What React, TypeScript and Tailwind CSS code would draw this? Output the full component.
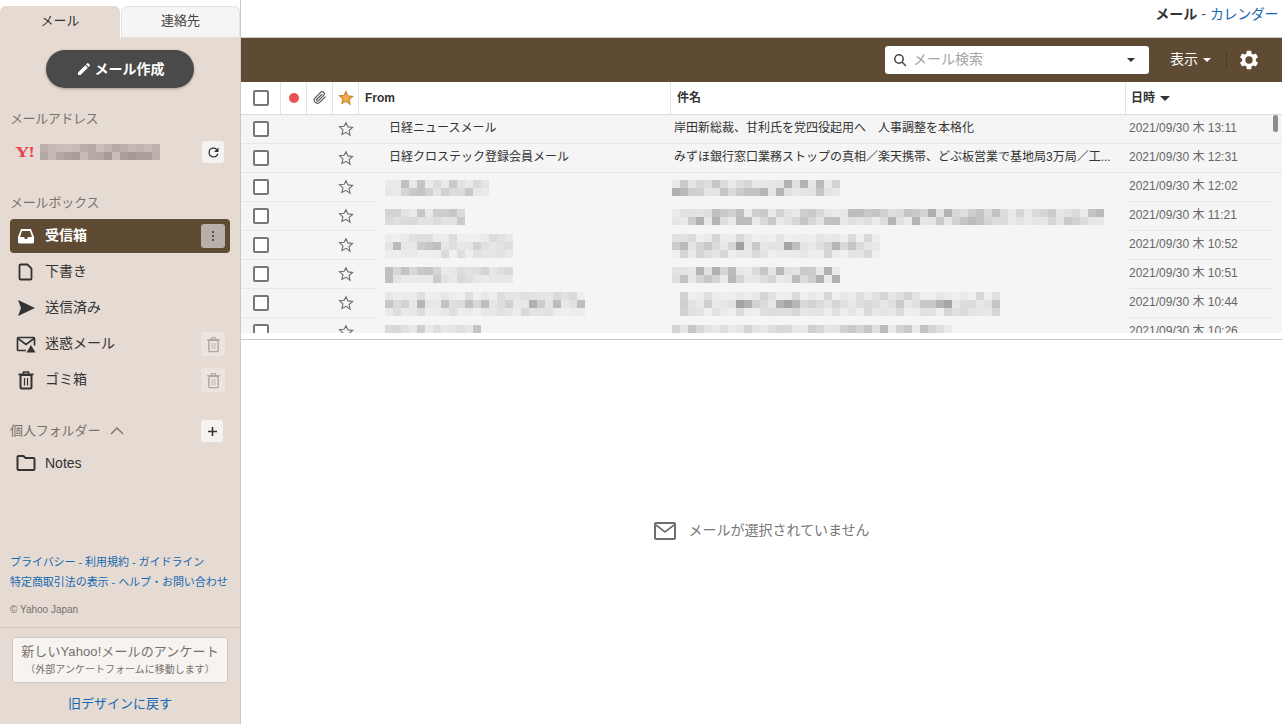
import React from "react";

const sans = "font-['Liberation_Sans','Noto_Sans_CJK_JP',sans-serif]";

function Mosaic({ width, rows, seed, dark = 0, offset = 0, warm = false }: { width: number; rows: number; seed: number; dark?: number; offset?: number; warm?: boolean }) {
  const cell = 8;
  const cols = Math.ceil(width / cell);
  let s = seed * 7919 + 13;
  const rnd = () => {
    s = (s * 16807) % 2147483647;
    return (s % 1000) / 1000;
  };
  const grid: string[][] = [];
  for (let r = 0; r < rows; r++) {
    const row: string[] = [];
    for (let c = 0; c < cols; c++) {
      const v = rnd();
      if (warm) {
        const d = Math.round(v * 45);
        row.push(`rgb(${205 - d},${194 - d},${187 - d})`);
      } else {
        const strong = rows === 3 ? (r === 1 ? 1 : 0.4) : 0.8;
        const depth = (v * v * (55 + dark) + 12) * strong;
        const g = Math.round(244 - depth);
        row.push(`rgb(${g},${g},${g})`);
      }
    }
    grid.push(row);
  }
  return (
    <div className="flex flex-col" style={{ marginLeft: offset }}>
      {grid.map((row, i) => (
        <div key={i} className="flex h-2">
          {row.map((c, j) => (
            <div key={j} className="h-2 w-2 shrink-0" style={{ backgroundColor: c }} />
          ))}
        </div>
      ))}
    </div>
  );
}

function Ico({ d, size = 20, color = "#3c3c3c", className = "" }: { d: string; size?: number; color?: string; className?: string }) {
  return (
    <svg width={size} height={size} viewBox="0 0 24 24" fill={color} className={className}>
      <path d={d} />
    </svg>
  );
}

const P = {
  edit: "M3 17.25V21h3.75L17.81 9.94l-3.75-3.75L3 17.25zM20.71 7.04a1 1 0 0 0 0-1.41l-2.34-2.34a1 1 0 0 0-1.41 0l-1.83 1.83 3.75 3.75 1.83-1.83z",
  refresh: "M17.65 6.35A7.96 7.96 0 0 0 12 4a8 8 0 1 0 7.73 10h-2.08A6 6 0 1 1 12 6c1.66 0 3.14.69 4.22 1.78L13 11h7V4l-2.35 2.35z",
  gear: "M19.43 12.98c.04-.32.07-.64.07-.98s-.03-.66-.07-.98l2.11-1.65a.5.5 0 0 0 .12-.64l-2-3.46a.5.5 0 0 0-.61-.22l-2.49 1a7.3 7.3 0 0 0-1.69-.98l-.38-2.65A.49.49 0 0 0 14 2h-4a.49.49 0 0 0-.49.42l-.38 2.65c-.61.25-1.17.59-1.69.98l-2.49-1a.49.49 0 0 0-.61.22l-2 3.46a.49.49 0 0 0 .12.64l2.11 1.65c-.04.32-.07.65-.07.98s.03.66.07.98l-2.11 1.65a.5.5 0 0 0-.12.64l2 3.46c.12.22.39.3.61.22l2.49-1c.52.4 1.08.73 1.69.98l.38 2.65c.03.24.24.42.49.42h4c.25 0 .46-.18.49-.42l.38-2.65c.61-.25 1.17-.59 1.69-.98l2.49 1c.23.09.49 0 .61-.22l2-3.46a.5.5 0 0 0-.12-.64l-2.11-1.65zM12 16a4 4 0 1 1 0-8 4 4 0 0 1 0 8z",
};

function Trash({ size = 20, color = "#333", sw = 2 }: { size?: number; color?: string; sw?: number }) {
  return (
    <svg width={size} height={size} viewBox="0 0 20 20" fill="none" stroke={color} strokeWidth={sw}>
      <path d="M2.5 4.5h15" />
      <path d="M7.5 4V2h5v2" strokeWidth={sw * 0.8} />
      <rect x="4.5" y="5" width="11" height="13.5" rx="1.5" />
      <path d="M8.5 8v7.5M11.5 8v7.5" strokeWidth={sw * 0.6} />
    </svg>
  );
}

function Star({ filled = false }: { filled?: boolean }) {
  return (
    <svg width="16" height="16" viewBox="0 0 24 24" fill={filled ? "#f2a950" : "none"} stroke={filled ? "#c98a2e" : "#6f6f6f"} strokeWidth={filled ? 1.8 : 1.7} strokeLinejoin="miter">
      <path d="M12 2.5l2.9 6.4 6.9.7-5.2 4.7 1.5 6.9L12 17l-6.1 3.2 1.5-6.9-5.2-4.7 6.9-.7z" />
    </svg>
  );
}

function Check() {
  return <div className="h-4 w-4 shrink-0 rounded-[2px] border-2 border-[#777] bg-white" />;
}

function Caret({ color = "#333", w = 5 }: { color?: string; w?: number }) {
  return <span className="inline-block h-0 w-0 border-x-transparent" style={{ borderLeftWidth: w, borderRightWidth: w, borderTopWidth: w, borderTopColor: color, borderBottomWidth: 0 }} />;
}

function NavRow({ icon, label, active = false, action }: { icon: React.ReactNode; label: string; active?: boolean; action?: React.ReactNode }) {
  return (
    <div className={`mb-[2px] flex h-[34px] items-center rounded-[4px] pl-[6px] pr-[5px] ${active ? "bg-[#5f4a33]" : ""}`}>
      <div className="flex w-[20px] justify-center">{icon}</div>
      <span className={`ml-[9px] flex-1 pb-[2px] text-[14px] ${active ? "font-bold text-white" : "text-[#333]"}`}>{label}</span>
      {action}
    </div>
  );
}

function DisabledTrash() {
  return (
    <div className="flex h-6 w-6 items-center justify-center rounded-[3px] bg-[#ece5df]">
      <Trash size={17} color="#a29c97" sw={1.4} />
    </div>
  );
}

function Sidebar() {
  return (
    <aside className="flex h-[724px] w-[241px] shrink-0 flex-col border-r border-[#c9c9c9] bg-white">
      <div className="flex h-[38px] items-end pt-[6px]">
        <div className="flex h-[32px] w-[120px] items-center justify-center rounded-t-[6px] bg-[#e5dbd3] pb-[2px] text-[13px] text-[#333]">メール</div>
        <div className="ml-px flex h-[32px] w-[119px] items-center justify-center rounded-t-[6px] border border-[#e2e2e2] bg-[#f5f5f5] pb-[2px] text-[13px] text-[#444]">連絡先</div>
      </div>
      <div className="flex flex-1 flex-col bg-[#e5dbd3]">
        <div className="flex justify-center pt-3">
          <div className="flex h-[38px] w-[148px] items-center justify-center rounded-full bg-[#4a4a4a] text-[14px] font-bold text-white shadow-[0_1px_3px_rgba(0,0,0,0.3)]">
            <Ico d={P.edit} size={16} color="#fff" className="mr-[3px]" />
            メール作成
          </div>
        </div>

        <div className="mt-[21px] pl-[10px] text-[13px] leading-[20px] tracking-[-0.4px] text-[#77716c]">メールアドレス</div>
        <div className="mt-[11px] flex h-[24px] items-center pl-[15px] pr-[16px]">
          <span className="w-[25px] origin-left scale-x-[1.35] font-['Liberation_Serif',serif] text-[15px] font-bold leading-none tracking-[-1px] text-[#f0404f]">Y!</span>
          <Mosaic width={120} rows={2} seed={3} warm />
          <div className="ml-auto flex h-[22px] w-[22px] items-center justify-center rounded-[3px] bg-[#f5f3f1]">
            <Ico d={P.refresh} size={15} color="#333" />
          </div>
        </div>

        <div className="mt-[29px] pl-[10px] text-[13px] leading-[20px] tracking-[-0.2px] text-[#77716c]">メールボックス</div>
        <div className="mt-[6px] px-[10px]">
          <NavRow
            active
            label="受信箱"
            icon={
              <svg width="18" height="18" viewBox="0 0 18 18" fill="#fff">
                <path d="M4 2h10l3 8v5a1.5 1.5 0 0 1-1.5 1.5h-13A1.5 1.5 0 0 1 1 15v-5zM5 4l-2 6h4l1 2h2l1-2h4l-2-6z" fillRule="evenodd" />
              </svg>
            }
            action={
              <div className="flex h-6 w-6 flex-col items-center justify-center gap-[2px] rounded-[3px] bg-[#b8b0a8]">
                <i className="h-[2px] w-[2px] rounded-full bg-[#333]" />
                <i className="h-[2px] w-[2px] rounded-full bg-[#333]" />
                <i className="h-[2px] w-[2px] rounded-full bg-[#333]" />
              </div>
            }
          />
          <NavRow
            label="下書き"
            icon={
              <svg width="18" height="18" viewBox="0 0 18 18" fill="none" stroke="#333" strokeWidth="1.8">
                <path d="M3.5 1.5h7l4 4v10a1 1 0 0 1-1 1h-10a1 1 0 0 1-1-1v-13a1 1 0 0 1 1-1z" />
              </svg>
            }
          />
          <NavRow
            label="送信済み"
            icon={
              <svg width="19" height="18" viewBox="0 0 19 18" fill="#333">
                <path d="M1 1L18 9 1 17l3-8z" />
              </svg>
            }
          />
          <NavRow
            label="迷惑メール"
            icon={
              <svg width="20" height="18" viewBox="0 0 20 18" fill="none" stroke="#333" strokeWidth="1.7">
                <path d="M10 15.5H2.5a1 1 0 0 1-1-1v-11a1 1 0 0 1 1-1h15a1 1 0 0 1 1 1v7" />
                <path d="M2 3.5l8 6 8-6" />
                <path d="M15 10l4.5 7.5h-9z" fill="#333" stroke="none" />
              </svg>
            }
            action={<DisabledTrash />}
          />
          <NavRow label="ゴミ箱" icon={<Trash size={20} />} action={<DisabledTrash />} />
        </div>

        <div className="mt-[20px] flex h-6 items-center pl-[10px] pr-[17px]">
          <span className="text-[13px] tracking-[-0.1px] text-[#77716c]">個人フォルダー</span>
          <svg width="14" height="14" viewBox="0 0 14 14" fill="none" stroke="#77716c" strokeWidth="1.3" className="ml-[10px]">
            <path d="M1 10l6-6 6 6" />
          </svg>
          <div className="ml-auto flex h-[22px] w-[22px] items-center justify-center rounded-[3px] bg-[#f5f3f1]">
            <svg width="11" height="11" viewBox="0 0 11 11" stroke="#333" strokeWidth="1.6">
              <path d="M5.5 1v9M1 5.5h9" />
            </svg>
          </div>
        </div>
        <div className="mt-[3px] flex h-[34px] items-center pl-[16px]">
          <svg width="20" height="18" viewBox="0 0 20 18" fill="none" stroke="#333" strokeWidth="2">
            <path d="M1.5 3a1 1 0 0 1 1-1h5l2 2h8a1 1 0 0 1 1 1v10a1 1 0 0 1-1 1h-15a1 1 0 0 1-1-1z" />
          </svg>
          <span className="ml-[9px] text-[14px] text-[#333]">Notes</span>
        </div>

        <div className="mt-auto px-[10px] text-[11px] tracking-[-0.05px] text-[#1568b0]">
          <div className="leading-[20px]">プライバシー - 利用規約 - ガイドライン</div>
          <div className="leading-[20px]">特定商取引法の表示 - ヘルプ・お問い合わせ</div>
        </div>
        <div className="mt-[8px] px-[10px] text-[10px] leading-[20px] text-[#77716c]">© Yahoo Japan</div>
        <div className="mt-[7px] border-t border-[#cfc6be] px-[12px] pt-[9px]">
          <div className="flex h-[46px] flex-col items-center justify-center rounded-[3px] border border-[#cfc8c2] bg-[#f6f3f0]">
            <div className="text-[13px] leading-[20px] tracking-[0.1px] text-[#77716c]">新しいYahoo!メールのアンケート</div>
            <div className="text-[10px] leading-[16px] text-[#77716c]">（外部アンケートフォームに移動します）</div>
          </div>
          <div className="mb-[10px] mt-[11px] text-center text-[13px] leading-[20px] text-[#1568b0]">旧デザインに戻す</div>
        </div>
      </div>
    </aside>
  );
}

type Mail = { from?: string; subj?: string; date: string; fw?: number; fr?: number; sw?: number; sr?: number; so?: number };

const mails: Mail[] = [
  { from: "日経ニュースメール", subj: "岸田新総裁、甘利氏を党四役起用へ　人事調整を本格化", date: "2021/09/30 木 13:11" },
  { from: "日経クロステック登録会員メール", subj: "みずほ銀行窓口業務ストップの真相／楽天携帯、どぶ板営業で基地局3万局／工...", date: "2021/09/30 木 12:31" },
  { fw: 104, fr: 2, sw: 168, sr: 2, so: 0, date: "2021/09/30 木 12:02" },
  { fw: 80, fr: 2, sw: 432, sr: 2, so: 0, date: "2021/09/30 木 11:21" },
  { fw: 128, fr: 3, sw: 208, sr: 3, so: 0, date: "2021/09/30 木 10:52" },
  { fw: 128, fr: 2, sw: 168, sr: 2, so: 0, date: "2021/09/30 木 10:51" },
  { fw: 200, fr: 3, sw: 320, sr: 3, so: 8, date: "2021/09/30 木 10:44" },
  { fw: 96, fr: 2, sw: 280, sr: 2, so: 0, date: "2021/09/30 木 10:26" },
];

function Row({ m, i }: { m: Mail; i: number }) {
  const line = m.from ? "border-b border-[#e8e8e8]" : "";
  return (
    <div className={`relative flex h-[29px] bg-[#f5f5f5] pr-[10px] text-[12px] ${line}`}>
      <div className={`flex w-[136px] shrink-0 ${m.from ? "" : "border-b border-[#e8e8e8]"}`}>
        <div className="flex w-[40px] items-center justify-center"><Check /></div>
        <div className="w-[52px]" />
        <div className="flex w-[26px] items-center justify-center"><Star /></div>
      </div>
      <div className="flex w-[296px] shrink-0 items-center">
        {m.from ? (
          <span className="ml-[12px] pb-[2px] text-[#333]">{m.from}</span>
        ) : (
          <div className="ml-[8px]"><Mosaic width={m.fw!} rows={m.fr!} seed={i + 10} /></div>
        )}
      </div>
      <div className="flex w-[456px] shrink-0 items-center">
        {m.subj ? (
          <span className="ml-[1px] pb-[2px] text-[#333]">{m.subj}</span>
        ) : (
          <div className="ml-[-1px]"><Mosaic width={m.sw!} rows={m.sr!} seed={i + 30} offset={m.so} dark={20} /></div>
        )}
      </div>
      <div className={`flex flex-1 items-center ${m.from ? "" : "border-b border-[#e8e8e8]"}`}>
        <span className="whitespace-nowrap pb-[2px] text-[#666]">{m.date}</span>
      </div>
    </div>
  );
}

function HeaderCell({ className, children }: { className: string; children?: React.ReactNode }) {
  return <div className={`flex h-full items-center border-r border-[#e4e4e4] ${className}`}>{children}</div>;
}

function Main() {
  return (
    <main className="flex h-[724px] min-w-0 flex-1 flex-col bg-white">
      <div className="flex h-[37px] items-start justify-end pr-[4px] pt-[4px] text-[14px] leading-[20px]">
        <span className="font-bold text-[#333]">メール</span>
        <span className="mx-[4px] text-[#555]">-</span>
        <span className="tracking-[-0.4px] text-[#1568b0]">カレンダー</span>
      </div>
      <div className="flex h-[45px] shrink-0 items-center justify-end border-t border-[#cfcfcf] bg-[#5f4a33] pr-[22px]">
        <div className="flex h-[28px] w-[264px] items-center rounded-[3px] bg-white pl-[8px] pr-[14px]">
          <svg width="14" height="14" viewBox="0 0 14 14" fill="none" stroke="#444" strokeWidth="1.5">
            <circle cx="6" cy="6" r="4.2" />
            <path d="M9 9l4 4" />
          </svg>
          <span className="ml-[6px] flex-1 pb-[1px] text-[14px] text-[#a5a5a5]">メール検索</span>
          <Caret color="#333" w={4} />
        </div>
        <span className="ml-[21px] pb-[1px] text-[14px] text-white">表示</span>
        <span className="ml-[5px] flex"><Caret color="#fff" w={4} /></span>
        <span className="ml-[15px] h-[16px] w-px bg-[#4d3b28]" />
        <Ico d={P.gear} size={22} color="#fff" className="ml-[11px]" />
      </div>

      <div className="flex h-[33px] shrink-0 items-center border-b border-[#dcdcdc] text-[12px] font-bold text-[#333]">
        <HeaderCell className="w-[40px] justify-center"><Check /></HeaderCell>
        <HeaderCell className="w-[26px] justify-center"><i className="h-[10px] w-[10px] rounded-full bg-[#ec5155]" /></HeaderCell>
        <HeaderCell className="w-[26px] justify-center">
          <svg width="14" height="14" viewBox="0 0 24 24" fill="none" stroke="#555" strokeWidth="2" strokeLinecap="round" strokeLinejoin="round">
            <path d="M21 10l-9.5 9.5a5.5 5.5 0 0 1-7.8-7.8L13.5 2a3.7 3.7 0 0 1 5.2 5.2l-9.6 9.6a1.8 1.8 0 0 1-2.6-2.6L15 6" />
          </svg>
        </HeaderCell>
        <HeaderCell className="w-[26px] justify-center"><Star filled /></HeaderCell>
        <HeaderCell className="w-[312px] pl-[6px]">From</HeaderCell>
        <HeaderCell className="w-[455px] pl-[6px]">件名</HeaderCell>
        <div className="flex h-full flex-1 items-center gap-[5px] pl-[5px]">日時<Caret w={5} /></div>
      </div>

      <div className="relative h-[218px] shrink-0 overflow-hidden">
        {mails.map((m, i) => <Row key={i} m={m} i={i} />)}
        <div className="absolute right-[4px] top-0 h-[17px] w-[5px] rounded-full bg-[#8b8b8b]" />
      </div>
      <div className="h-[7px] shrink-0 border-b border-[#c9c9c9] bg-white" />

      <div className="flex flex-1 items-center justify-center pb-[3px]">
        <svg width="24" height="20" viewBox="0 0 24 20" fill="none" stroke="#6e6e6e" strokeWidth="2">
          <rect x="2" y="2" width="20" height="16" rx="1" />
          <path d="M3 4l9 7 9-7" strokeWidth="1.6" />
        </svg>
        <span className="ml-[11px] text-[14px] text-[#777]">メールが選択されていません</span>
      </div>
    </main>
  );
}

export default function App() {
  return (
    <div className={`flex h-[724px] w-[1282px] overflow-hidden bg-white ${sans}`}>
      <Sidebar />
      <Main />
    </div>
  );
}
